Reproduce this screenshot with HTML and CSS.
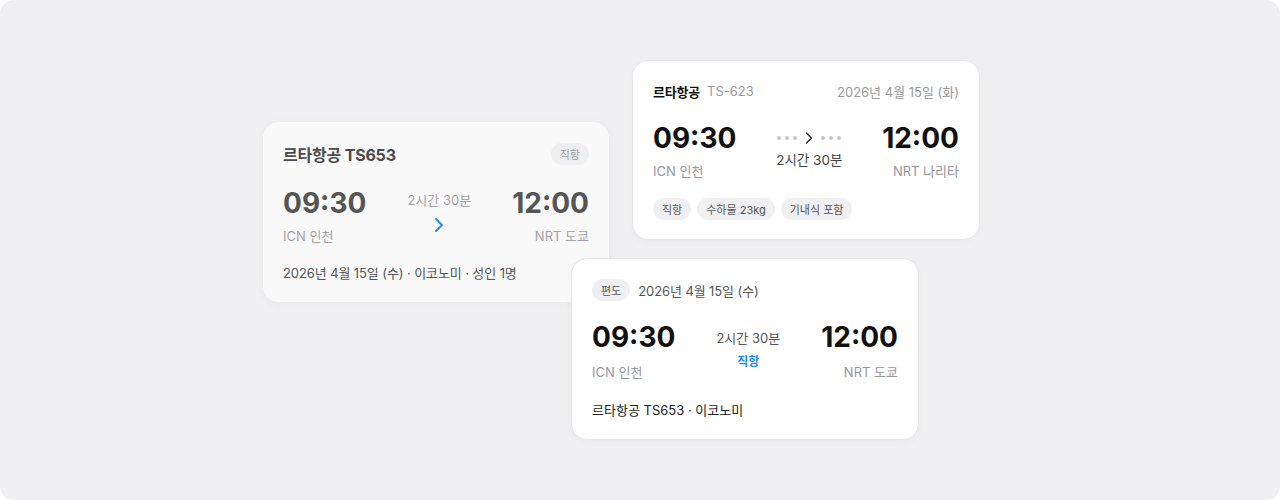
FILE: index.html
```html
<!DOCTYPE html>
<html lang="ko">
<head>
<meta charset="utf-8">
<link rel="stylesheet" href="styles.css">
</head>
<body>
<div class="frame">
  <div class="card card-muted pos-a">
    <div class="head">
      <div class="title">르타항공 TS653</div>
      <span class="chip chip-muted">직항</span>
    </div>
    <div class="route route-a">
      <div class="end">
        <div class="time">09:30</div>
        <div class="apt">ICN 인천</div>
      </div>
      <div class="mid">
        <div class="dur dur-muted">2시간 30분</div>
        <svg class="chev-blue" width="10" height="16" viewBox="0 0 10 16"><path d="M2 2l6 6-6 6" fill="none" stroke="#2b8ef2" stroke-width="2" stroke-linecap="round" stroke-linejoin="round"/></svg>
      </div>
      <div class="end end-r">
        <div class="time">12:00</div>
        <div class="apt">NRT 도쿄</div>
      </div>
    </div>
    <div class="foot foot-muted">2026년 4월 15일 (수) · 이코노미 · 성인 1명</div>
  </div>

  <div class="card pos-b">
    <div class="head head-b">
      <div class="airline"><b>르타항공</b><span class="code">TS-623</span></div>
      <div class="date-r">2026년 4월 15일 (화)</div>
    </div>
    <div class="route route-b">
      <div class="end">
        <div class="time">09:30</div>
        <div class="apt">ICN 인천</div>
      </div>
      <div class="mid">
        <div class="track">
          <i class="dot"></i><i class="dot"></i><i class="dot"></i>
          <svg width="10" height="14" viewBox="0 0 10 14"><path d="M2.5 2l5 5-5 5" fill="none" stroke="#333" stroke-width="1.6" stroke-linecap="round" stroke-linejoin="round"/></svg>
          <i class="dot"></i><i class="dot"></i><i class="dot"></i>
        </div>
        <div class="dur dur-b">2시간 30분</div>
      </div>
      <div class="end end-r">
        <div class="time">12:00</div>
        <div class="apt">NRT 나리타</div>
      </div>
    </div>
    <div class="chips">
      <span class="chip">직항</span>
      <span class="chip">수하물 23kg</span>
      <span class="chip">기내식 포함</span>
    </div>
  </div>

  <div class="card pos-c">
    <div class="head head-c">
      <span class="chip">편도</span>
      <span class="date-c">2026년 4월 15일 (수)</span>
    </div>
    <div class="route route-c">
      <div class="end">
        <div class="time">09:30</div>
        <div class="apt">ICN 인천</div>
      </div>
      <div class="mid">
        <div class="dur dur-c">2시간 30분</div>
        <div class="direct">직항</div>
      </div>
      <div class="end end-r">
        <div class="time">12:00</div>
        <div class="apt">NRT 도쿄</div>
      </div>
    </div>
    <div class="foot foot-c">르타항공 TS653 · 이코노미</div>
  </div>
</div>
</body>
</html>
```

FILE: styles.css
```css
* { box-sizing: border-box; margin: 0; padding: 0; }
html, body { width: 1280px; height: 500px; background: #ffffff; overflow: hidden; }
body {
  font-family: Inter, "Noto Sans CJK KR", sans-serif;
  color: #111;
  -webkit-font-smoothing: antialiased;
}
.frame {
  position: relative;
  width: 1280px;
  height: 500px;
  background: #f0f0f2;
  border-radius: 14px;
}
.card {
  position: absolute;
  width: 348px;
  background: #ffffff;
  border: 1px solid #e6e6ea;
  border-radius: 16px;
  box-shadow: 0 2px 8px rgba(0,0,0,0.03);
  padding: 0 20px;
  display: flex;
  flex-direction: column;
}
.pos-a { left: 262px; top: 121px; height: 182px; padding-top: 21px; }
.pos-b { left: 632px; top: 60px; height: 180px; padding-top: 20px; }
.pos-c { left: 571px; top: 258px; height: 182px; padding-top: 20px; }

.card-muted { background: #f9f9f9; border-color: #ececef; }

.head { display: flex; align-items: center; justify-content: space-between; height: 22px; }
.title { font-size: 16px; font-weight: 700; color: #4a4a4a; letter-spacing: -0.2px; }

.chip {
  display: inline-flex; align-items: center; height: 22px; padding: 0 9px;
  border-radius: 11px; background: #f0f0f2; color: #555; font-size: 11px;
}
.chip-muted { background: #efeff1; color: #9a9a9e; }

.route { display: flex; justify-content: space-between; }
.end { display: flex; flex-direction: column; }
.end-r { align-items: flex-end; }
.time { font-size: 28px; font-weight: 700; line-height: 36px; color: #111; }
.apt { font-size: 13px; line-height: 18px; color: #96969b; margin-top: 6px; }
.mid { display: flex; flex-direction: column; align-items: center; }
.dur { font-size: 13px; line-height: 18px; }

.route-a { margin-top: 20px; }
.card-muted .time { color: #555; }
.card-muted .apt { color: #a3a3a7; }
.dur-muted { color: #a3a3a7; margin-top: 6px; }
.chev-blue { margin-top: 8px; }
.foot { font-size: 13px; line-height: 18px; }
.foot-muted { margin-top: 19px; color: #555; letter-spacing: -0.1px; }

.head-b { height: 20px; }
.airline { font-size: 13px; display: flex; align-items: center; gap: 7px; }
.airline b { font-weight: 700; color: #111; letter-spacing: -0.2px; }
.code { color: #9a9a9e; }
.date-r { font-size: 13px; color: #9a9a9e; }
.route-b { margin-top: 19px; }
.track { display: flex; align-items: center; gap: 4px; height: 18px; margin-top: 9px; }
.track svg { margin: 0 3px; }
.dot { display: block; width: 4px; height: 4px; border-radius: 50%; background: #c4c4c8; }
.dur-b { color: #444; font-size: 13.5px; margin-top: 4px; }
.chips { display: flex; gap: 6px; margin-top: 18px; }

.head-c { justify-content: flex-start; gap: 8px; }
.date-c { font-size: 13px; color: #555; letter-spacing: -0.1px; }
.route-c { margin-top: 18px; }
.route-c .apt { margin-top: 8px; }
.dur-c { color: #555; margin-top: 10px; }
.direct { color: #1a8cf0; font-size: 12px; font-weight: 600; line-height: 16px; margin-top: 7px; }
.foot-c { margin-top: 20px; color: #222; }
```
